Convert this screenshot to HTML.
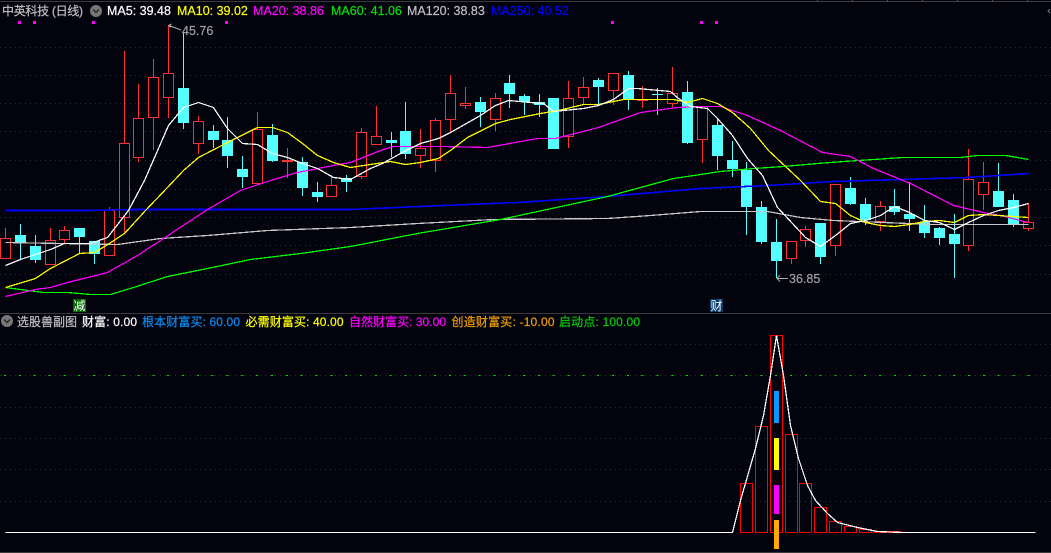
<!DOCTYPE html>
<html><head><meta charset="utf-8">
<style>
html,body{margin:0;padding:0;background:#03030e;width:1051px;height:553px;overflow:hidden}
svg{display:block}
text{font-family:"Liberation Sans","Noto Sans CJK SC",sans-serif;font-size:12.5px;stroke-width:.2px;paint-order:stroke}
</style></head><body>
<svg width="1051" height="553" viewBox="0 0 1051 553" xmlns="http://www.w3.org/2000/svg">
<rect width="1051" height="553" fill="#03030e"/>
<g shape-rendering="crispEdges">
<path d="M0 1.5H1051M0 313.5H1051M0 552.5H1051" stroke="#3a3a3a" fill="none"/>
<path d="M817.5 0V2M852.5 0V2M887.5 0V2M922.5 0V2M957.5 0V2M992.5 0V2M1027.5 0V2" stroke="#4a4a4a"/>
<path d="M0 47.5H1051M0 75.5H1051M0 103.5H1051M0 131.5H1051M0 160.5H1051M0 189.5H1051M0 217.5H1051M0 245.5H1051M0 274.5H1051M0 344.5H1051M0 375.5H1051M0 407.5H1051M0 438.5H1051M0 469.5H1051M0 501.5H1051" stroke="#2e2e2e" stroke-dasharray="1 4" fill="none"/>
<path d="M4 375.5H1040" stroke="#00e000" stroke-dasharray="2 12.83" fill="none"/>
<path fill="#ff00ff" d="M18 21h3v3h-3zM33 21h3v3h-3zM92 21h3v3h-3zM225 21h3v3h-3zM611 21h3v3h-3zM700 21h3v3h-3zM715 21h3v3h-3z"/>

<path fill="none" stroke="#ff3232" d="M5.5 228V258M50.5 228V265M64.5 226V243M109.5 207V255M124.5 51V233M138.5 84V162M153.5 59V150M168.5 26V118M198.5 116V154M257.5 112V183M287.5 148V178M331.5 175V196M361.5 128V179M376.5 106V145M420.5 129V168M435.5 118V172M450.5 75V132M465.5 87V109M495.5 93V131M568.5 81V148M583.5 77V104M613.5 73V105M642.5 86V108M672.5 67V107M702.5 106V163M791.5 241V264M805.5 226V247M835.5 184V256M880.5 201V231M968.5 149V251M983.5 162V210M1028.5 203V231"/>
<g fill="#03030e" stroke="#ff3232">
<rect x="0.5" y="238.5" width="10" height="20"/><rect x="45.5" y="240.5" width="10" height="24"/><rect x="59.5" y="230.5" width="10" height="9"/><rect x="104.5" y="210.5" width="10" height="45"/><rect x="119.5" y="143.5" width="10" height="74"/><rect x="133.5" y="118.5" width="10" height="39"/><rect x="148.5" y="77.5" width="10" height="40"/><rect x="163.5" y="73.5" width="10" height="24"/><rect x="193.5" y="121.5" width="10" height="22"/><rect x="252.5" y="129.5" width="10" height="54"/><rect x="326.5" y="185.5" width="10" height="11"/><rect x="356.5" y="132.5" width="10" height="44"/><rect x="371.5" y="136.5" width="10" height="8"/><rect x="415.5" y="148.5" width="10" height="7"/><rect x="430.5" y="120.5" width="10" height="40"/><rect x="445.5" y="93.5" width="10" height="26"/><rect x="460.5" y="103.5" width="10" height="2"/><rect x="490.5" y="98.5" width="10" height="21"/><rect x="563.5" y="98.5" width="10" height="38"/><rect x="578.5" y="87.5" width="10" height="10"/><rect x="608.5" y="73.5" width="10" height="17"/><rect x="667.5" y="93.5" width="10" height="10"/><rect x="697.5" y="106.5" width="10" height="33"/><rect x="786.5" y="241.5" width="10" height="17"/><rect x="800.5" y="229.5" width="10" height="11"/><rect x="830.5" y="184.5" width="10" height="61"/><rect x="875.5" y="206.5" width="10" height="15"/><rect x="963.5" y="179.5" width="10" height="66"/><rect x="978.5" y="182.5" width="10" height="12"/><rect x="1023.5" y="222.5" width="10" height="6"/>
</g>
<path fill="#ff3232" d="M282 160h11v2h-11zM637 100h11v1h-11z"/>

<path fill="none" stroke="#54ffff" d="M20.5 224V259M35.5 235V263M79.5 228V253M94.5 241V264M183.5 32V129M213.5 125V148M227.5 117V168M242.5 156V188M272.5 124V162M302.5 157V196M317.5 182V202M346.5 175V192M391.5 132V157M405.5 102V159M480.5 97V127M509.5 75V108M524.5 94V115M539.5 94V117M598.5 78V104M628.5 71V110M657.5 88V115M687.5 81V144M717.5 118V170M732.5 141V177M746.5 162V235M761.5 201V244M776.5 219V278M820.5 223V264M850.5 177V205M865.5 198V225M894.5 189V215M909.5 182V231M924.5 205V238M939.5 227V245M954.5 214V278M998.5 163V207M1013.5 194V227"/>
<path fill="#54ffff" d="M15 235h11v7h-11zM30 246h11v14h-11zM74 228h11v9h-11zM89 241h11v13h-11zM178 88h11v35h-11zM208 131h11v9h-11zM222 140h11v16h-11zM237 169h11v8h-11zM267 135h11v26h-11zM297 162h11v26h-11zM312 192h11v5h-11zM341 178h11v4h-11zM386 140h11v3h-11zM400 131h11v23h-11zM475 102h11v10h-11zM504 83h11v11h-11zM519 96h11v6h-11zM534 102h11v3h-11zM548 98h11v51h-11zM593 80h11v7h-11zM623 75h11v24h-11zM652 94h11v1h-11zM682 92h11v51h-11zM712 125h11v31h-11zM727 160h11v9h-11zM741 170h11v37h-11zM756 207h11v35h-11zM771 242h11v19h-11zM815 223h11v34h-11zM845 188h11v16h-11zM860 204h11v16h-11zM889 206h11v6h-11zM904 214h11v5h-11zM919 222h11v11h-11zM934 228h11v10h-11zM949 234h11v10h-11zM993 191h11v16h-11zM1008 200h11v25h-11z"/>

<g fill="none" stroke-width="1.25" stroke-linejoin="round" transform="translate(.5 .5)">
<polyline stroke="#0000ff" stroke-width="1.6" points="5,210 87,210 133,209 333,209 350,209 443,205 517,202 607,196 700,188 767,185 833,181 900,179 967,177 1028,173"/>
<polyline stroke="#c8c8c8" points="5,242 117,244 160,238 207,235 267,230 350,227 417,223 493,219 607,218 650,215 700,211 767,211 800,217 833,220 883,222 933,224 1028,224"/>
<polyline stroke="#00ff00" points="5,287 20,289 43,292 67,292 90,294 110,294 133,287 167,276 207,268 250,259 300,253 350,246 417,233 500,219 607,196 673,178 700,174 720,171 753,168 783,166 817,163 843,161 873,159 902,157 960,157 977,155 1005,155 1017,157 1028,159"/>
<polyline stroke="#ff00ff" points="5,296 35,289 50,287 67,282 107,272 137,255 163,238 207,209 240,190 270,180 297,172 333,165 350,162 380,150 393,146 443,146 487,147 537,138 555,138 598,127 640,112 677,107 700,106 720,106 747,115 780,130 822,152 850,156 873,168 910,183 953,205 983,212 1000,215 1028,222"/>
<polyline stroke="#ffff00" points="5,287 35,278 50,268 79,253 94,252 109,243 124,233 145,210 167,187 183,170 198,157 227,142 257,127 272,127 287,132 302,143 317,155 333,162 350,167 370,164 390,161 405,164 420,162 438,158 450,150 467,137 495,123 510,119 540,113 558,110 583,104 598,104 613,101 623,99 673,99 687,102 702,98 717,103 732,112 750,128 768,150 785,166 800,180 820,201 835,203 850,215 865,222 880,225 894,226 909,224 924,221 939,220 954,222 968,215 983,214 998,215 1013,216 1028,217"/>
<polyline stroke="#ffffff" points="5,265 20,259 35,254 50,249 64,243 90,243 107,237 128,210 144,180 168,125 183,107 198,102 213,107 227,128 242,143 257,144 272,153 287,157 302,163 317,168 333,177 350,179 370,168 382,163 400,153 420,143 438,138 450,132 480,115 495,105 508,100 530,102 543,103 553,111 583,108 598,105 613,99 628,88 637,88 670,91 678,98 690,106 707,108 717,118 732,135 747,158 762,175 777,207 792,223 805,237 820,246 835,235 850,223 865,220 880,215 894,206 909,212 924,220 939,222 954,229 968,222 983,215 998,210 1013,207 1028,203"/>
</g>

<!-- sub panel -->
<g fill="none" stroke="#ff0000">
<rect x="740.5" y="483.5" width="12" height="49"/><rect x="755.5" y="426.5" width="12" height="106"/><rect x="770.5" y="335.5" width="12" height="197"/><rect x="785.5" y="434.5" width="12" height="98"/><rect x="799.5" y="483.5" width="12" height="49"/><rect x="814.5" y="507.5" width="12" height="25"/><rect x="829.5" y="521.5" width="12" height="11"/><rect x="844.5" y="526.5" width="12" height="6"/><rect x="859.5" y="529.5" width="12" height="3"/><rect x="874.5" y="531.5" width="12" height="1"/><rect x="888.5" y="531.5" width="13" height="1"/>
</g>
<rect x="774" y="391" width="5" height="32" fill="#0a96ff"/>
<rect x="774" y="438" width="5" height="32" fill="#ffff00"/>
<rect x="774" y="485" width="5" height="29" fill="#ff00ff"/>
<rect x="774" y="520" width="5" height="29" fill="#ffaa00"/>
<polyline fill="none" stroke="#ffffff" stroke-width="1.25" transform="translate(.5 .5)" points="5,532 732,532 740,500 755,448 763,415 770,375 776,335 783,375 790,425 798,458 807,485 815,500 827,513 837,522 857,527 877,531 902,532 1035,532"/>
<rect x="73" y="299" width="13" height="13" fill="#056b05"/>
<rect x="710" y="299" width="13" height="13" fill="#0a3d6a"/>
</g>

<!-- icons -->
<circle cx="96" cy="11" r="6" fill="#777"/>
<path d="M93 9.5l3 3 3-3" fill="none" stroke="#222" stroke-width="1.3"/>
<circle cx="7" cy="321" r="6" fill="#777"/>
<path d="M4 319.5l3 3 3-3" fill="none" stroke="#222" stroke-width="1.3"/>
<path d="M1050 9l-2 2 2 2" fill="none" stroke="#777"/>
<!-- price markers -->
<path d="M181 30L169 25.5M171.5 24L168.5 25.5L171 27.5" fill="none" stroke="#aaa"/>
<path d="M788 278.5H777M780 275.5L777 278.5L780 281.5" fill="none" stroke="#aaa"/>

<text x="182" y="35" fill="#a0a0a0" stroke="#a0a0a0">45.76</text>
<text x="789" y="283" fill="#a0a0a0" stroke="#a0a0a0">36.85</text>
<text x="73.5" y="310" fill="#ffffff" style="font-size:12px">减</text>
<text x="710.5" y="310" fill="#ffffff" style="font-size:12px">财</text>

<text x="2" y="15" fill="#c0c0c0" stroke="#c0c0c0" textLength="81" style="font-size:12px">中英科技 (日线)</text>
<text x="107" y="15" fill="#ffffff" stroke="#ffffff">MA5: 39.48</text>
<text x="177" y="15" fill="#ffff00" stroke="#ffff00">MA10: 39.02</text>
<text x="253" y="15" fill="#ff00ff" stroke="#ff00ff">MA20: 38.86</text>
<text x="331" y="15" fill="#00e000" stroke="#00e000">MA60: 41.06</text>
<text x="407" y="15" fill="#c0c0c0" stroke="#c0c0c0">MA120: 38.83</text>
<text x="491" y="15" fill="#0000ff" stroke="#0000ff">MA250: 40.52</text>

<text x="17" y="326" fill="#c0c0c0" stroke="#c0c0c0" style="font-size:12px">选股兽副图</text>
<text x="82" y="326" fill="#ffffff" stroke="#ffffff" textLength="55" style="font-size:12px">财富: 0.00</text>
<text x="142" y="326" fill="#0a8cf0" stroke="#0a8cf0" textLength="98" style="font-size:12px">根本财富买: 60.00</text>
<text x="245.5" y="326" fill="#ffff00" stroke="#ffff00" textLength="98" style="font-size:12px">必需财富买: 40.00</text>
<text x="349" y="326" fill="#ff00ff" stroke="#ff00ff" textLength="97" style="font-size:12px">自然财富买: 30.00</text>
<text x="451.5" y="326" fill="#f0a000" stroke="#f0a000" textLength="103" style="font-size:12px">创造财富买: -10.00</text>
<text x="559" y="326" fill="#00d000" stroke="#00d000" textLength="81" style="font-size:12px">启动点: 100.00</text>
</svg>
</body></html>
